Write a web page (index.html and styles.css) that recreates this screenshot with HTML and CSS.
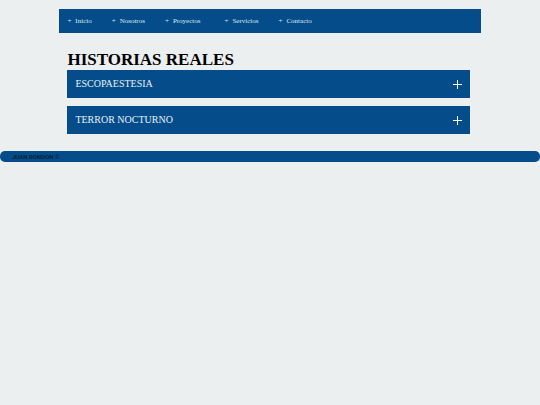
FILE: index.html
```html
<!DOCTYPE html>
<html lang="es">

<head>
  <meta charset="UTF-8">
  <meta name="viewport" content="width=device-width, initial-scale=1.0">
  <title>Historias reales</title>
  <link rel="stylesheet" href="styles.css">
</head>

<body>
  <nav class="menu">
    <ul class="menu-list">
      <li><a href="#inicio">Inicio</a></li>
      <li><a href="#nosotros">Nosotros</a></li>
      <li class="has-submenu"><a href="#proyectos">Proyectos</a></li>
      <li><a href="#servicios">Servicios</a></li>
      <li><a href="#contacto">Contacto</a></li>
    </ul>
  </nav>

  <main class="stories">
    <h1>HISTORIAS REALES</h1>
    <div class="accordion">
      <button class="accordion-header" type="button" aria-expanded="false">
        <span>ESCOPAESTESIA</span>
        <svg class="plus" viewBox="0 0 9 9" aria-hidden="true">
          <path d="M0 4.5H9M4.5 0V9" />
        </svg>
      </button>
      <button class="accordion-header" type="button" aria-expanded="false">
        <span>TERROR NOCTURNO</span>
        <svg class="plus" viewBox="0 0 9 9" aria-hidden="true">
          <path d="M0 4.5H9M4.5 0V9" />
        </svg>
      </button>
    </div>
  </main>

  <footer class="footer">JUAN RONDON ©</footer>
</body>

</html>
```

FILE: styles.css
```css
* {
  margin: 0;
  padding: 0;
  box-sizing: border-box;
}

body {
  background: #ebeff0;
  font-family: "Liberation Serif", "Times New Roman", serif;
}

.menu {
  width: 78%;
  margin: 9px auto 0;
  padding: 8px;
  background: #054d8a;
}

.menu-list {
  display: flex;
  gap: 20px;
  list-style: none;
}

.menu-list a {
  display: block;
  color: #dfeaf2;
  font-size: 7px;
  line-height: 8px;
  text-decoration: none;
}

.menu-list a::before {
  content: "+";
  margin-right: 4px;
}

.has-submenu {
  padding-right: 4px;
}

.stories {
  width: 78%;
  margin: 18px auto 0;
  padding: 0 11px 0 8px;
}

h1 {
  margin-bottom: 2px;
  font-size: 17px;
  line-height: 17px;
}

.accordion {
  display: grid;
  gap: 8px;
}

.accordion-header {
  display: flex;
  align-items: center;
  justify-content: space-between;
  width: 100%;
  padding: 8px;
  border: 0;
  background: #054d8a;
  color: #e6f2f8;
  font-family: inherit;
  font-size: 10px;
  line-height: 12px;
  text-align: left;
  cursor: pointer;
}

.plus {
  width: 9px;
  height: 9px;
  stroke: #fff;
  fill: none;
}

.footer {
  margin-top: 17px;
  padding: 0 12px;
  border-radius: 5px;
  background: #054d8a;
  color: #03182f;
  font-family: Roboto, Arial, sans-serif;
  font-size: 6px;
  font-weight: 500;
  line-height: 11px;
}
```
